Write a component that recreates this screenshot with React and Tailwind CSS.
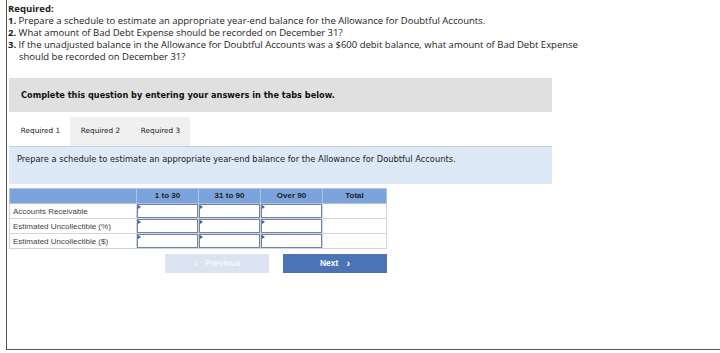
export default function App() {
  const rows = [
    "Accounts Receivable",
    "Estimated Uncollectible (%)",
    "Estimated Uncollectible ($)",
  ];
  const cols = ["1 to 30", "31 to 90", "Over 90"];

  return (
    <div className="w-[720px] h-[353px] bg-white overflow-hidden">
      <div className="ml-[6px] h-[350px] border-l border-b border-[#555] pl-[1px] pt-[3px]">
        <div className="w-[590px] font-['Open_Sans',sans-serif] text-[9.5px] leading-[12px] text-[#222]">
          <div className="font-bold text-[9.5px]">Required:</div>
          <div>
            <b>1.</b> Prepare a schedule to estimate an appropriate year-end balance for the Allowance for Doubtful Accounts.
          </div>
          <div>
            <b>2.</b> What amount of Bad Debt Expense should be recorded on December 31?
          </div>
          <div className="pl-[11px] -indent-[11px]">
            <b>3.</b> If the unadjusted balance in the Allowance for Doubtful Accounts was a $600 debit balance, what amount of Bad Debt Expense should be recorded on December 31?
          </div>
        </div>

        <div className="ml-[1px] mt-[15px] w-[543px] h-[34px] bg-[#e0e0e0] flex items-center pl-[12px] font-['DejaVu_Sans',sans-serif] text-[8.2px] font-bold text-[#111]">
          Complete this question by entering your answers in the tabs below.
        </div>

        <div className="ml-[1px] w-[543px] font-['DejaVu_Sans',sans-serif] text-[7.3px] text-[#222]">
          <div className="mt-[5px] flex pl-[2px]">
            <div className="w-[59px] h-[29px] bg-white flex items-center justify-center">Required 1</div>
            <div className="w-[61px] h-[29px] bg-[#f0f0f0] flex items-center justify-center">Required 2</div>
            <div className="w-[59px] h-[29px] bg-[#f0f0f0] flex items-center justify-center">Required 3</div>
          </div>
          <div className="h-[38px] bg-[#dde9f7] border-t border-[#c8d0da] pl-[8px] pt-[6px] text-[8.3px]">
            Prepare a schedule to estimate an appropriate year-end balance for the Allowance for Doubtful Accounts.
          </div>
        </div>

        <table className="ml-[1px] mt-[4px] border-collapse font-['Liberation_Sans',sans-serif] text-[8px] text-[#333]">
          <thead>
            <tr className="h-[15px] bg-[#7ba3dc] text-[#222]">
              <th className="w-[127px] border border-[#b5c3d6]"></th>
              {cols.map((c) => (
                <th key={c} className="w-[62px] border border-[#b5c3d6] font-bold">{c}</th>
              ))}
              <th className="w-[64px] border border-[#b5c3d6] font-bold">Total</th>
            </tr>
          </thead>
          <tbody>
            {rows.map((r) => (
              <tr key={r} className="h-[15px]">
                <td className="border border-[#cfd6e0] pl-[3px] text-[#444] leading-[13px]">{r}</td>
                {cols.map((c) => (
                  <td key={c} className="border border-[#cfd6e0] p-0">
                    <div className="relative h-[14px] border-[1.5px] border-[#7282a0] bg-white">
                      <span className="absolute left-0 top-0 w-0 h-0 border-t-[2px] border-t-transparent border-b-[2px] border-b-transparent border-l-[3px] border-l-[#3f66a0]" />
                    </div>
                  </td>
                ))}
                <td className="border border-[#cfd6e0]"></td>
              </tr>
            ))}
          </tbody>
        </table>

        <div className="mt-[5px] ml-[157px] flex gap-[14px] font-['Liberation_Sans',sans-serif] text-[8.5px] font-bold">
          <button className="w-[104px] h-[19px] bg-[#dbe4f0] text-[#f4f7fb] flex items-center justify-center gap-[8px]">
            <span className="text-[10px]">‹</span> Previous
          </button>
          <button className="w-[104px] h-[19px] bg-[#4a74b5] text-white flex items-center justify-center gap-[8px]">
            Next <span className="text-[11px]">›</span>
          </button>
        </div>
      </div>
    </div>
  );
}
